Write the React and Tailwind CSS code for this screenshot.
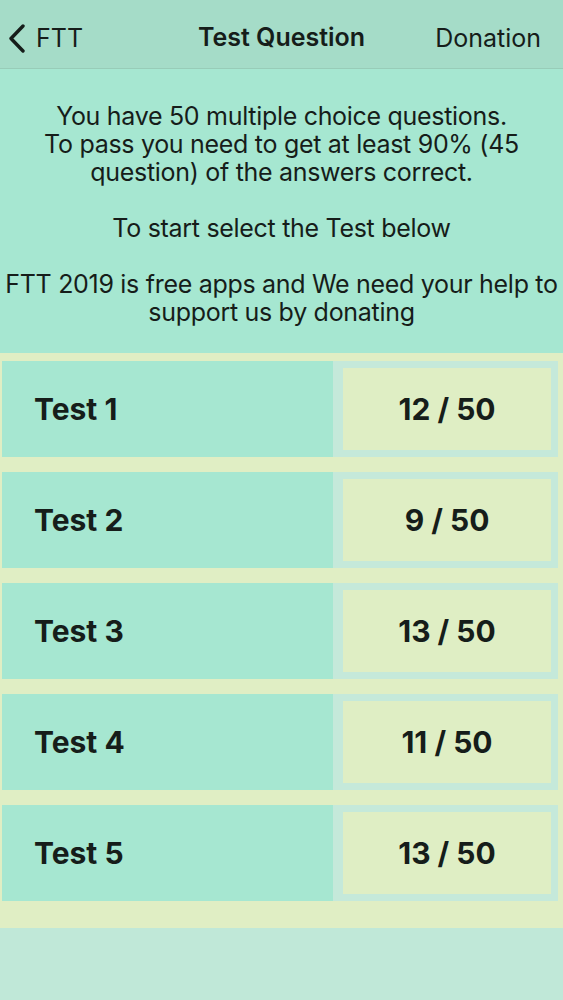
import React from "react";

const tests = [
  { name: "Test 1", score: "12 / 50" },
  { name: "Test 2", score: "9 / 50" },
  { name: "Test 3", score: "13 / 50" },
  { name: "Test 4", score: "11 / 50" },
  { name: "Test 5", score: "13 / 50" },
];

export default function App() {
  return (
    <div
      className="w-[563px] h-[1000px] flex flex-col bg-[#c0e8d8] text-[#161d1a] overflow-hidden"
      style={{ fontFamily: "Inter, 'Liberation Sans', sans-serif" }}
    >
      <div className="h-[69px] shrink-0 bg-[#a5dcc8] border-b border-[#98ccb8] flex items-center pt-[8px] px-[8px] relative">
        <div className="flex items-center gap-[10px]">
          <svg width="18" height="29" viewBox="0 0 18 29" fill="none">
            <path d="M15 2 L3 14.5 L15 27" stroke="#161d1a" strokeWidth="3.4" strokeLinecap="round" strokeLinejoin="round" />
          </svg>
          <span className="text-[25px] leading-none">FTT</span>
        </div>
        <div className="absolute left-0 right-0 text-center pointer-events-none">
          <span className="text-[25px] font-semibold leading-none">Test Question</span>
        </div>
        <span className="ml-auto mr-[14px] text-[25px] leading-none">Donation</span>
      </div>

      <div className="bg-[#a6e7d1] pt-[33px] pb-[27px] text-center text-[25px] leading-[28px] tracking-[-0.3px]">
        <p>You have 50 multiple choice questions.</p>
        <p>To pass you need to get at least 90% (45</p>
        <p>question) of the answers correct.</p>
        <p>&nbsp;</p>
        <p>To start select the Test below</p>
        <p>&nbsp;</p>
        <p className="whitespace-nowrap">FTT 2019 is free apps and We need your help to</p>
        <p>support us by donating</p>
      </div>

      <div className="bg-[#e0eec4] pt-[8px] pl-[2px] pr-[5px] pb-[27px] flex flex-col gap-[15px]">
        {tests.map((t) => (
          <div key={t.name} className="h-[96px] flex">
            <div className="w-[331px] bg-[#a6e7d1] flex items-center pl-[32px]">
              <span className="text-[30px] font-bold">{t.name}</span>
            </div>
            <div className="flex-1 bg-[#c5e9da] p-[7px_7px_7px_10px] flex">
              <div className="flex-1 bg-[#dfeec4] flex items-center justify-center">
                <span className="text-[30px] font-bold">{t.score}</span>
              </div>
            </div>
          </div>
        ))}
      </div>
    </div>
  );
}
